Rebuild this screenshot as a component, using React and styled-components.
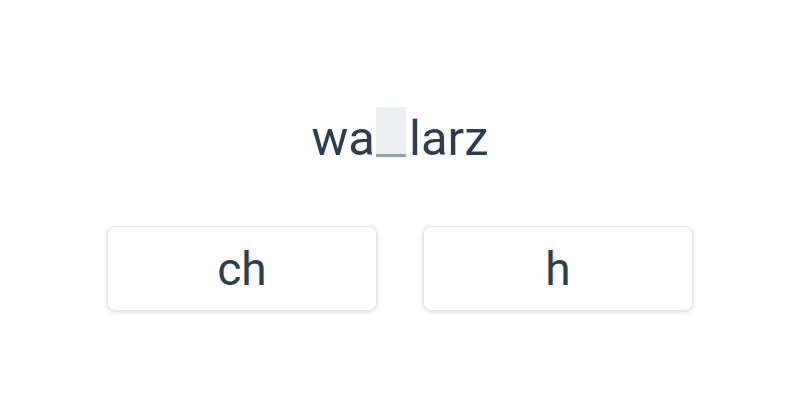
import React from 'react';
import styled, { createGlobalStyle } from 'styled-components';

const GlobalStyle = createGlobalStyle`
  html, body {
    margin: 0;
    padding: 0;
    background: #fff;
  }
  body {
    font-family: Roboto, "Liberation Sans", sans-serif;
    color: #2c3e50;
  }
`;

function App() {
  const word = { before: 'wa', after: 'larz' };
  const options = ['ch', 'h'];

  return (
    <>
      <GlobalStyle />
      <Screen>
        <Word>
          {word.before}
          <Blank />
          {word.after}
        </Word>
        <Options>
          {options.map((opt) => (
            <Option key={opt}>{opt}</Option>
          ))}
        </Options>
      </Screen>
    </>
  );
}

const Screen = styled.div`
  width: 800px;
  height: 400px;
  display: flex;
  flex-direction: column;
  align-items: center;
  padding-top: 107px;
  box-sizing: border-box;
`;

const Word = styled.div`
  font-size: 49px;
  line-height: 64px;
  height: 64px;
  white-space: nowrap;
`;

const Blank = styled.span`
  display: inline-block;
  width: 30px;
  height: 50px;
  margin: 0 3px 0 1px;
  vertical-align: -2px;
  background: #ecf0f1;
  border-bottom: 3px solid #8fa5a1;
  box-sizing: border-box;
`;

const Options = styled.div`
  display: grid;
  grid-template-columns: 270px 270px;
  gap: 46px;
  margin-top: 55px;
`;

const Option = styled.button`
  height: 85px;
  background: #fff;
  border: 1px solid #e3e6e8;
  border-radius: 8px;
  box-shadow: 0 1px 5px rgba(0, 0, 0, 0.14);
  font-family: Roboto, "Liberation Sans", sans-serif;
  font-size: 46px;
  color: #2c3e50;
  cursor: pointer;
  padding: 0;
`;

export default App;
